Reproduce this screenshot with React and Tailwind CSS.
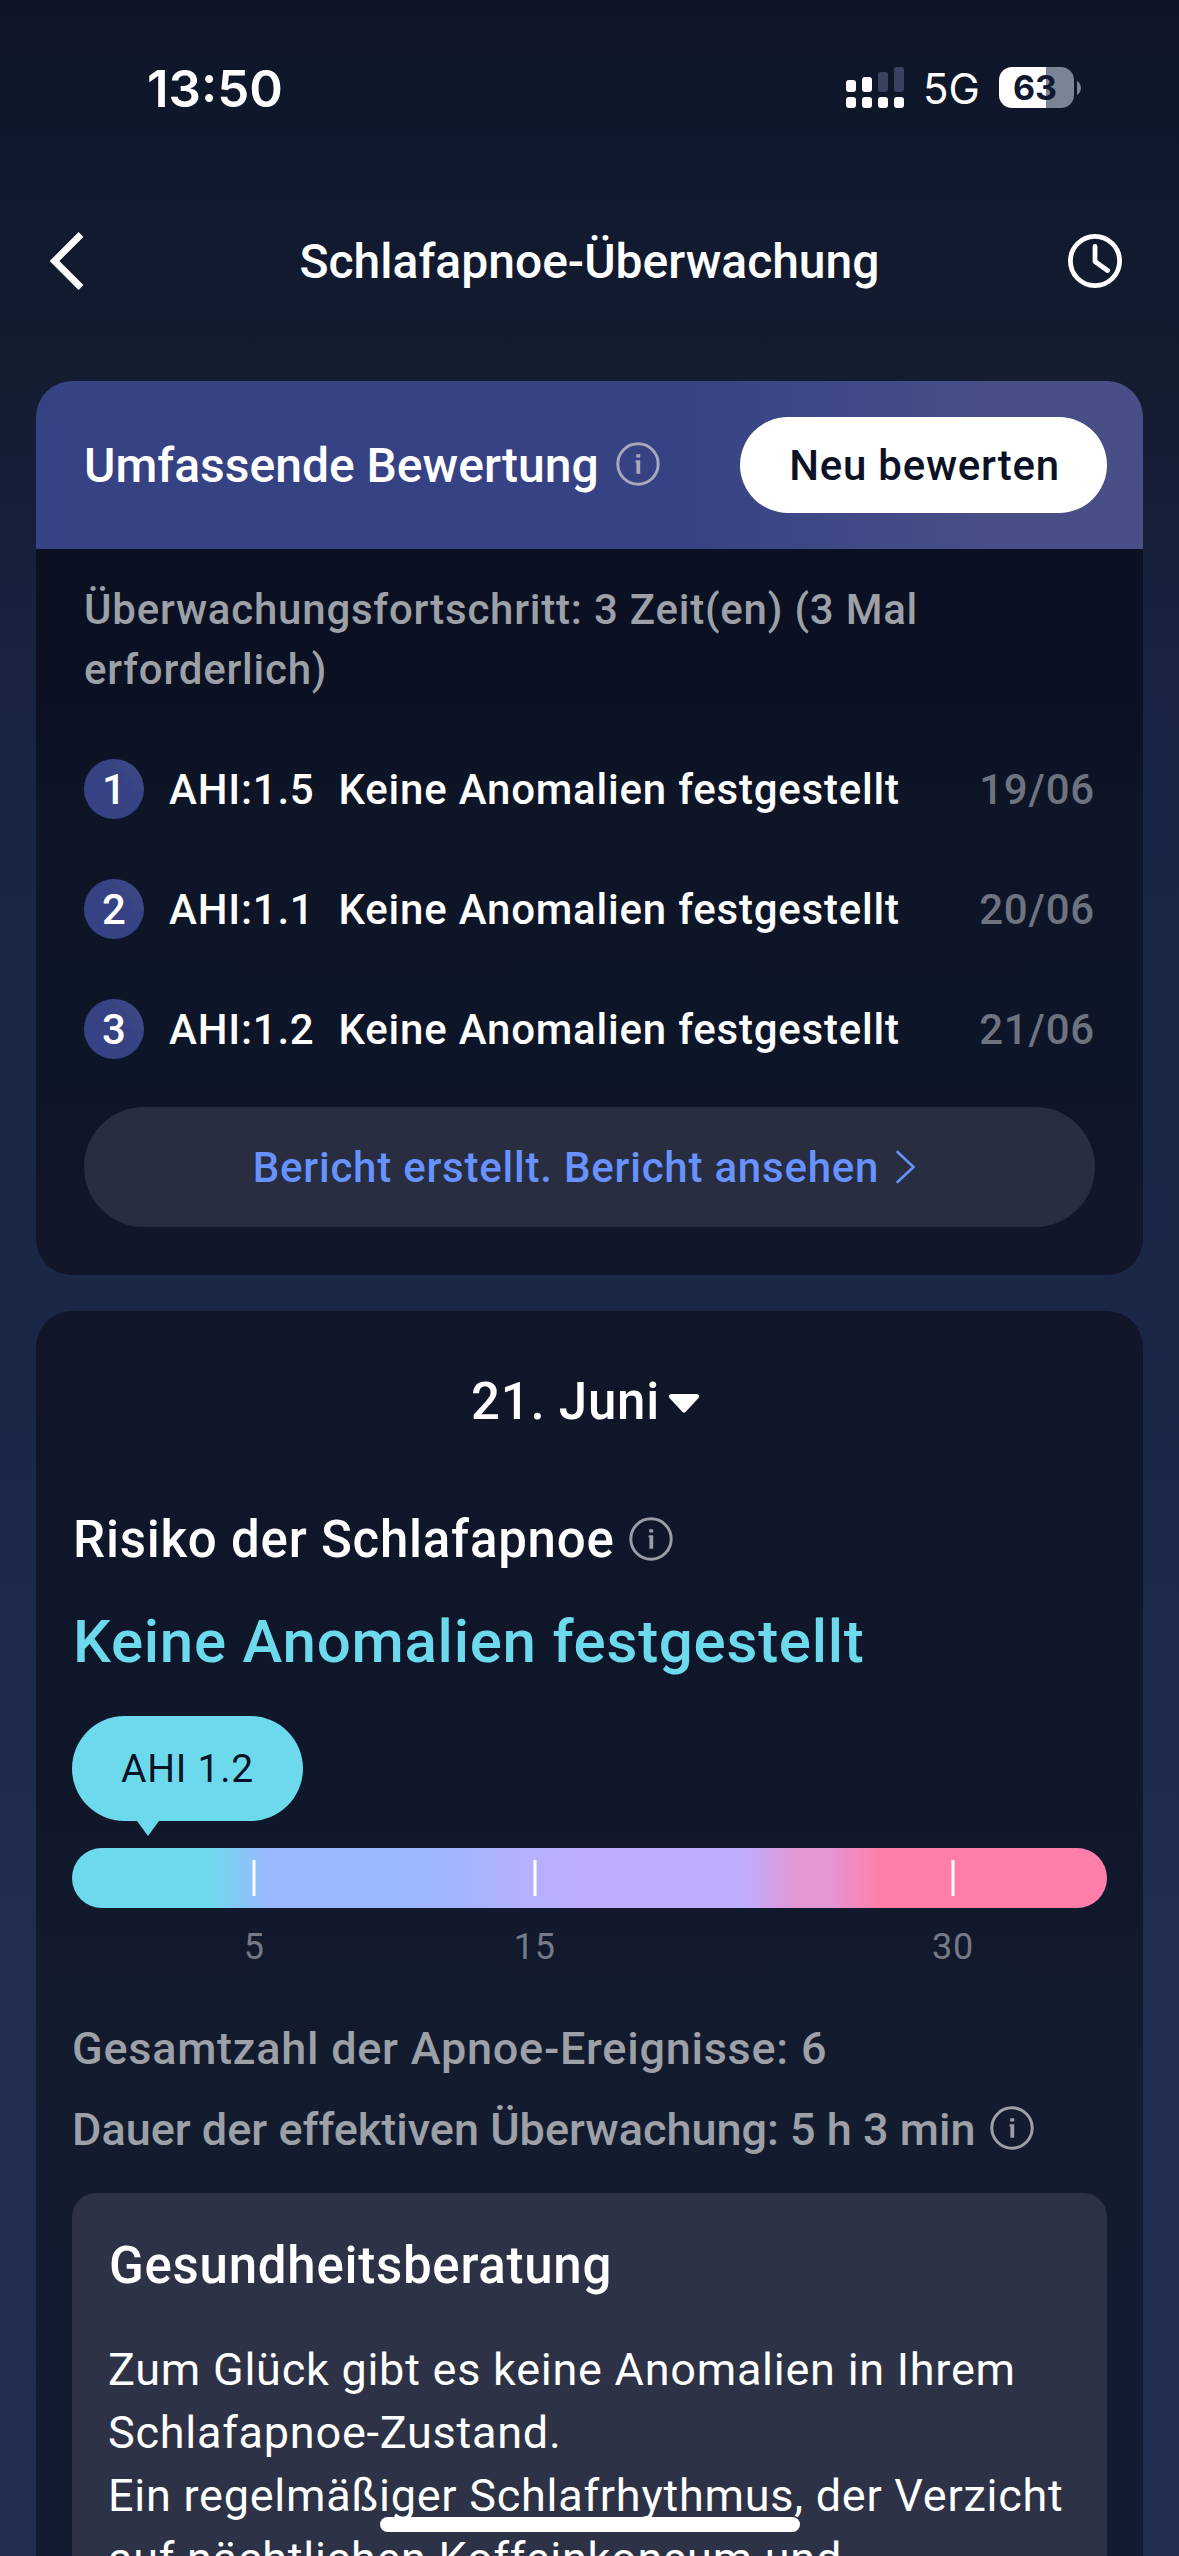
import React from "react";

const measurements = [
  { id: 1, ahi: "1.5", result: "Keine Anomalien festgestellt", date: "19/06" },
  { id: 2, ahi: "1.1", result: "Keine Anomalien festgestellt", date: "20/06" },
  { id: 3, ahi: "1.2", result: "Keine Anomalien festgestellt", date: "21/06" },
];

const thresholds = [
  { value: 5, position: 17.6 },
  { value: 15, position: 44.7 },
  { value: 30, position: 85.12 },
];

function InfoIcon({ className }) {
  return (
    <svg viewBox="0 0 44 44" fill="none" className={className}>
      <circle cx="22" cy="22" r="20.2" stroke="currentColor" strokeWidth="3" />
      <path d="M20.2 12.2h4v3.4h-4zM19.6 18.2h4.600v13.600h-3.800V20.400h-.8z" fill="currentColor" />
    </svg>
  );
}

function StatusBar() {
  return (
    <div className="flex h-[175px] items-center justify-between pr-[98px] pl-[147px] font-['Inter',sans-serif]">
      <span className="pt-[1px] text-[51px] leading-none font-semibold">13:50</span>
      <div className="flex items-center">
        <svg width="58" height="41" viewBox="0 0 58 41" fill="currentColor">
          <rect y="13" width="10" height="12" rx="3" />
          <rect x="16" y="10" width="10" height="15" rx="3" />
          <rect x="32" y="5" width="10" height="20" rx="3" className="fill-[#3b4260]" />
          <rect x="48" width="10" height="25" rx="3" className="fill-[#3b4260]" />
          <rect y="30" width="10" height="11" rx="3" />
          <rect x="16" y="30" width="10" height="11" rx="3" />
          <rect x="32" y="30" width="10" height="11" rx="3" />
          <rect x="48" y="30" width="10" height="11" rx="3" />
        </svg>
        <span className="ml-[19px] w-[76px] pt-[3px] text-[42px] leading-none">5G</span>
        <div className="flex h-[41px] w-[75px] items-center justify-center rounded-[13px] bg-[linear-gradient(90deg,#ffffff_63%,#7b8494_63%)] pr-[3px] text-[34px] leading-none font-bold text-[#111930]">
          63
        </div>
        <svg width="4" height="14" viewBox="0 0 4 14" className="ml-[3px] fill-[#7b8494]">
          <path d="M0 0c2.500 1.500 4 4 4 7s-1.500 5.500-4 7z" />
        </svg>
      </div>
    </div>
  );
}

function NavBar() {
  return (
    <header className="flex h-[172px] items-center justify-between pr-[57px] pl-[49px]">
      <svg width="54" height="58" viewBox="0 0 54 58" fill="none" stroke="currentColor" strokeWidth="6.800">
        <path d="M32 2.500L5.500 29L32 55.500" />
      </svg>
      <h1 className="pt-[2px] pl-[8px] text-[48px] font-medium">Schlafapnoe-Überwachung</h1>
      <svg width="54" height="54" viewBox="0 0 54 54" fill="none" stroke="currentColor" strokeWidth="4.800">
        <circle cx="27" cy="27" r="24.600" />
        <path d="M27 12.500V27.500L39.500 36.500" strokeLinecap="round" strokeLinejoin="round" />
      </svg>
    </header>
  );
}

function AssessmentCard() {
  return (
    <section className="mx-[36px] mt-[34px] overflow-hidden rounded-[36px] bg-[linear-gradient(180deg,#0b1122_0%,#0b1122_35%,#0d1527_48%,#0d1528_78%,#111629_90%)]">
      <div className="flex h-[168px] items-center bg-[linear-gradient(90deg,#364284_57%,#484f87_86%)] pr-[36px] pl-[48px]">
        <h2 className="pt-[2px] text-[48px] font-medium">Umfassende Bewertung</h2>
        <InfoIcon className="mt-[-3px] ml-[17px] h-[44px] w-[44px] text-[#a7a9bb]" />
        <button className="ml-auto h-[96px] w-[367px] rounded-full bg-white pl-[2px] text-[42px] font-medium tracking-[0.75px] text-[#0b1226]">
          Neu bewerten
        </button>
      </div>
      <div className="px-[48px] pt-[31px] pb-[48px] text-[42px] font-medium tracking-[0.78px]">
        <p className="leading-[60px] text-[#9da0a7]">
          Überwachungsfortschritt: 3 Zeit(en) (3 Mal
          <br />
          erforderlich)
        </p>
        <ul className="mt-[29px]">
          {measurements.map((m) => (
            <li key={m.id} className="flex h-[120px] items-center gap-[24px]">
              <span className="flex h-[60px] w-[60px] items-center justify-center rounded-full bg-[linear-gradient(45deg,#364284_60%,#424b86)] tracking-normal">
                {m.id}
              </span>
              <span className="pl-[1px]">AHI:{m.ahi}</span>
              <span>{m.result}</span>
              <span className="ml-auto text-[#6e7380]">{m.date}</span>
            </li>
          ))}
        </ul>
        <button className="mt-[18px] flex h-[120px] w-full items-center justify-center gap-[12px] rounded-full bg-[#282d3f] pl-[1px] tracking-[0.78px] text-[#6792ff]">
          Bericht erstellt. Bericht ansehen
          <svg width="36" height="36" viewBox="0 0 36 36" fill="none" stroke="currentColor" strokeWidth="2.600" strokeLinecap="round">
            <path d="M6.500 3L22.500 18L6.500 33" />
          </svg>
        </button>
      </div>
    </section>
  );
}

function RiskScale() {
  return (
    <div>
      <div className="relative mt-[38px] flex h-[105px] w-[231px] items-center justify-center rounded-full bg-[#6cdaec] pt-[2px] text-[39px] tracking-[0.78px] text-[#0b1226]">
        AHI 1.2
        <svg width="22" height="15" viewBox="0 0 22 15" className="absolute top-full left-[65px] fill-[#6cdaec]">
          <path d="M0 0h22L11 15z" />
        </svg>
      </div>
      <div className="relative mt-[27px] h-[60px] rounded-full bg-[linear-gradient(90deg,#6cdaec_13%,#99b8ff_19%,#99b8ff_32%,#bfadff_49%,#bfadff_65%,#e396d4_70%,#e396d4_73%,#ff7faa_78%)]">
        {thresholds.map((t) => (
          <span
            key={t.value}
            className="absolute top-[12px] h-[36px] w-[3px] -translate-x-1/2 bg-white"
            style={{ left: `${t.position}%` }}
          />
        ))}
      </div>
      <div className="relative h-[78px] text-[36px] leading-[78px] tracking-[0.75px] text-[#757a87]">
        {thresholds.map((t) => (
          <span key={t.value} className="absolute top-0 -translate-x-1/2" style={{ left: `${t.position}%` }}>
            {t.value}
          </span>
        ))}
      </div>
    </div>
  );
}

function RiskCard() {
  return (
    <section className="mx-[36px] mt-[36px] rounded-t-[36px] bg-[linear-gradient(180deg,#111629_0%,#10172a_35%,#131b2f_60%,#121b31_100%)] px-[36px] pt-[45px]">
      <button className="flex h-[90px] w-full items-center justify-center text-[51px] font-medium tracking-[0.78px]">
        <span className="pt-[2px]">21. Juni</span>
        <svg width="48" height="48" viewBox="0 0 48 48" fill="currentColor">
          <path d="M11 17h26q3.500 1 1.500 4L25.500 35q-1.500 1.500-3 0L9.500 21q-2-3 1.500-4z" />
        </svg>
      </button>
      <div className="mt-[58px] flex h-[72px] items-center text-[51px] font-medium tracking-[0.78px]">
        <h2 className="pl-[1px]">Risiko der Schlafapnoe</h2>
        <InfoIcon className="mt-[-2px] ml-[14px] h-[44px] w-[44px] text-[#9a9da6]" />
      </div>
      <p className="mt-[30px] pl-[1px] text-[60px] leading-[72px] font-medium tracking-[0.75px] text-[#6cdaec]">
        Keine Anomalien festgestellt
      </p>
      <RiskScale />
      <div className="mt-[33px] text-[45px] leading-[60px] font-medium text-[#9da0a7]">
        <p className="tracking-[0.75px]">Gesamtzahl der Apnoe-Ereignisse: 6</p>
        <div className="mt-[20px] flex items-center">
          <span className="pt-[1px]">Dauer der effektiven Überwachung: 5 h 3 min</span>
          <InfoIcon className="mt-[-3px] ml-[14px] h-[44px] w-[44px]" />
        </div>
      </div>
      <div className="mt-[33px] rounded-t-[24px] bg-[#2d3246] px-[36px] pt-[37px] pb-[36px] tracking-[0.75px]">
        <h3 className="pl-[1px] text-[51px] leading-[72px] font-medium">Gesundheitsberatung</h3>
        <p className="mt-[36px] text-[45px] leading-[63px]">
          Zum Glück gibt es keine Anomalien in Ihrem
          <br />
          Schlafapnoe-Zustand.
          <br />
          Ein regelmäßiger Schlafrhythmus, der Verzicht
          <br />
          auf nächtlichen Koffeinkonsum und
        </p>
      </div>
    </section>
  );
}

export default function App() {
  return (
    <div className="relative h-[2556px] w-[1179px] overflow-hidden bg-[linear-gradient(180deg,#0d1526_0px,#111930_200px,#141c30_370px,#192444_700px,#1a2747_1100px,#1a2747_1400px,#202d4f_1900px,#222f52_2556px)] font-['Roboto',sans-serif] text-white">
      <StatusBar />
      <NavBar />
      <AssessmentCard />
      <RiskCard />
      <div className="absolute bottom-[24px] left-[380px] h-[15px] w-[420px] rounded-full bg-white" />
    </div>
  );
}
